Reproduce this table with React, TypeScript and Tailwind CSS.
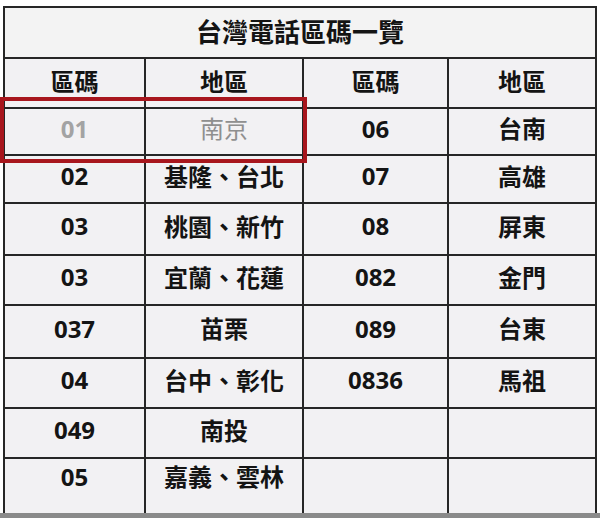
import React from "react";

type Row = { h: number; a: string; b: string; c: string; d: string; muted?: boolean; last?: boolean };

const rows: Row[] = [
  { h: 47, a: "01", b: "南京", c: "06", d: "台南", muted: true },
  { h: 48, a: "02", b: "基隆、台北", c: "07", d: "高雄" },
  { h: 52, a: "03", b: "桃園、新竹", c: "08", d: "屏東" },
  { h: 50, a: "03", b: "宜蘭、花蓮", c: "082", d: "金門" },
  { h: 53, a: "037", b: "苗栗", c: "089", d: "台東" },
  { h: 50, a: "04", b: "台中、彰化", c: "0836", d: "馬祖" },
  { h: 50, a: "049", b: "南投", c: "", d: "" },
  { h: 64, a: "05", b: "嘉義、雲林", c: "", d: "", last: true },
];

const cjk = "font-['Noto_Sans_CJK_TC',sans-serif] font-bold text-[24px] leading-none";
const num = "font-['Open_Sans','Noto_Sans',sans-serif] font-bold text-[24px] leading-none";
const cell = "border-2 border-[#262626] text-center align-middle p-0";

export default function App() {
  return (
    <div className="relative w-[600px] h-[518px] bg-white overflow-hidden flex flex-col">
      <div className="flex-1 overflow-hidden pt-[6px] pl-[3px]">
        <table className="table-fixed border-collapse w-[592px] bg-[#f2f1f3] text-[#141414]">
          <colgroup>
            <col className="w-[141px]" />
            <col className="w-[158px]" />
            <col className="w-[145px]" />
            <col className="w-[148px]" />
          </colgroup>
          <tbody>
            <tr className="h-[51px] bg-[#f3f3f3]">
              <td colSpan={4} className={cell}>
                <span className="font-['Noto_Sans_CJK_TC',sans-serif] font-bold text-[26px] leading-none">
                  台灣電話區碼一覽
                </span>
              </td>
            </tr>
            <tr className="h-[50px]">
              <td className={cell}><span className={cjk}>區碼</span></td>
              <td className={cell}><span className={cjk}>地區</span></td>
              <td className={cell}><span className={cjk}>區碼</span></td>
              <td className={cell}><span className={cjk}>地區</span></td>
            </tr>
            {rows.map((r, i) => {
              const c = r.last ? `${cell} pb-[24px]` : `${cell} pb-[3px]`;
              return (
                <tr key={i} style={{ height: r.h }}>
                  <td className={c}>
                    <span className={`${num} ${r.muted ? "text-[#a3a3a3]" : ""}`}>{r.a}</span>
                  </td>
                  <td className={c}>
                    <span className={`${cjk} ${r.muted ? "text-[#8f8f8f] font-normal" : ""}`}>{r.b}</span>
                  </td>
                  <td className={c}><span className={num}>{r.c}</span></td>
                  <td className={c}><span className={cjk}>{r.d}</span></td>
                </tr>
              );
            })}
          </tbody>
        </table>
      </div>
      <div className="h-[5px] bg-[#8a8a8a] shrink-0" />
      <div className="absolute left-0 top-[97px] w-[307px] h-[66px] border-[4px] border-[#a8161d]" />
    </div>
  );
}
